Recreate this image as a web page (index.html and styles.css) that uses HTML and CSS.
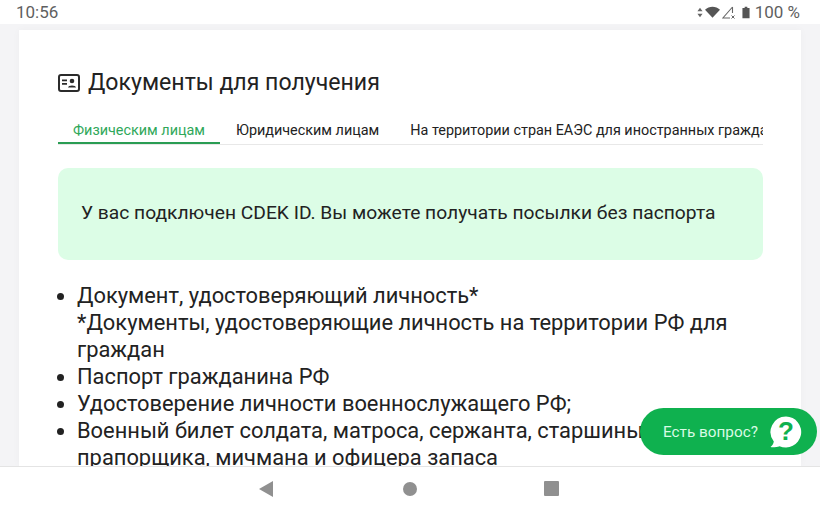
FILE: index.html
```html
<!DOCTYPE html>
<html lang="ru">
<head>
    <meta charset="UTF-8">
    <meta name="viewport" content="width=device-width, initial-scale=1.0">
    <title>Документы для получения</title>
    <link rel="stylesheet" href="styles.css">
</head>
<body>
    <div class="status-bar">
        <span class="status-time">10:56</span>
        <div class="status-icons">
            <svg width="6" height="11" viewBox="0 0 7 12"><path d="M3.5 0.5 6.5 4.600H0.500ZM3.500 11.500 0.500 7.400H6.500Z" fill="#666"/></svg>
            <svg class="status-wifi" width="15" height="12" viewBox="0 0 16 12"><path d="M0 3.600C4.400-.6 11.600-.6 16 3.600L8 12Z" fill="#555"/></svg>
            <svg class="status-signal" width="13" height="13" viewBox="0 0 13 13"><path d="M10.500 1 .9 12H8M10.500 1V7" fill="none" stroke="#666" stroke-width="1.100"/><path d="M9.500 9.500 12.500 12.500M12.500 9.500 9.500 12.500" stroke="#666" stroke-width="1"/></svg>
            <svg class="status-battery" width="8" height="13" viewBox="0 0 9 13"><path d="M3 0H6V1.300H8.500V13H.5V1.300H3Z" fill="#555"/></svg>
            <span class="status-level">100 %</span>
        </div>
    </div>

    <main class="page">
        <div class="card">
            <h1 class="title">
                <svg width="22" height="18" viewBox="0 0 22 18"><rect x="1" y="1" width="20" height="16" rx="2" fill="none" stroke="#2b2b2b" stroke-width="2"/><path d="M4 5.500H9V7.200H4ZM4 9H9V10.700H4Z" fill="#2b2b2b"/><circle cx="14" cy="7" r="2.300" fill="#2b2b2b"/><path d="M10 13.500C10 10.800 18 10.800 18 13.500Z" fill="#2b2b2b"/></svg>
                Документы для получения
            </h1>

            <div class="tabs">
                <a class="tab tab-active">Физическим лицам</a>
                <a class="tab">Юридическим лицам</a>
                <a class="tab">На территории стран ЕАЭС для иностранных граждан</a>
            </div>

            <div class="notice">У вас подключен CDEK ID. Вы можете получать посылки без паспорта</div>

            <ul class="doc-list">
                <li>Документ, удостоверяющий личность*<br>*Документы, удостоверяющие личность на территории РФ для граждан</li>
                <li>Паспорт гражданина РФ</li>
                <li>Удостоверение личности военнослужащего РФ;</li>
                <li>Военный билет солдата, матроса, сержанта, старшины, прапорщика, мичмана и офицера запаса</li>
            </ul>
        </div>
    </main>

    <a class="help-btn">
        <span>Есть вопрос?</span>
        <svg width="32" height="32" viewBox="0 0 32 32"><path d="M16 0.500A15.500 15.500 0 1 1 9.500 30.200C7 31 3 31.500 0.500 31C2.500 29.500 3.500 27.500 3.800 25.500A15.500 15.500 0 0 1 16 0.500Z" fill="#fff"/><text x="16" y="24" text-anchor="middle" class="help-mark">?</text></svg>
    </a>

    <div class="nav-bar">
        <svg class="nav-back" width="14" height="16" viewBox="0 0 14 16"><path d="M14 0V16L0 8Z" fill="#909090"/></svg>
        <svg width="14" height="14" viewBox="0 0 14 14"><circle cx="7" cy="7" r="7" fill="#909090"/></svg>
        <svg width="15" height="15" viewBox="0 0 15 15"><rect width="15" height="15" rx="1" fill="#909090"/></svg>
    </div>
</body>
</html>
```

FILE: styles.css
```css
* {
    box-sizing: border-box;
}
body {
    margin: 0;
    width: 820px;
    height: 512px;
    overflow: hidden;
    position: relative;
    display: flex;
    flex-direction: column;
    font-family: Roboto, "Noto Sans", sans-serif;
    background: #fff;
    color: #222;
}
.status-bar {
    height: 24px;
    flex: none;
    display: flex;
    justify-content: space-between;
    align-items: center;
    padding: 0 20px 0 16px;
    color: #5f5f5f;
    font-size: 17px;
}
.status-icons {
    display: flex;
    align-items: center;
    gap: 2px;
}
.status-battery {
    margin: 0 3px 0 5px;
}
.page {
    flex: 1;
    min-height: 0;
    overflow: hidden;
    background: #f4f4f6;
    padding: 6px 19px 0;
}
.card {
    background: #fff;
    height: 100%;
    padding: 39px 38px 0 39px;
    overflow: hidden;
    box-shadow: 0 0 8px rgba(0,0,0,0.03);
}
.title {
    display: flex;
    align-items: center;
    gap: 8px;
    margin: 0 0 12px;
    font-size: 23.1px;
    line-height: 28px;
    font-weight: 400;
}
.tabs {
    display: flex;
    gap: 1px;
    height: 36px;
    white-space: nowrap;
    overflow: hidden;
    border-bottom: 1px solid #e8e8e8;
}
.tab {
    padding: 10px 15px 0;
    font-size: 14.4px;
    line-height: 24px;
    flex: none;
}
.tab-active {
    color: #2fa85a;
    box-shadow: inset 0 -2px 0 #2a9d54;
}
.notice {
    margin-top: 23px;
    height: 92px;
    padding: 0 23px 3px;
    display: flex;
    align-items: center;
    background: #dcfde6;
    border-radius: 10px;
    font-size: 19.23px;
}
.doc-list {
    margin: 22px 0 0;
    padding: 0 0 0 19px;
    font-size: 21.87px;
    line-height: 27px;
}
.help-btn {
    position: absolute;
    left: 640px;
    top: 408px;
    width: 177px;
    height: 47px;
    border-radius: 24px;
    background: #0fb14f;
    color: #d9fbe5;
    font-size: 15.3px;
    display: flex;
    align-items: center;
    justify-content: space-between;
    padding: 0 15px 0 23px;
}
.help-mark {
    font-family: "Liberation Sans", sans-serif;
    font-size: 26px;
    font-weight: 700;
    fill: #0fb14f;
}
.nav-bar {
    height: 46px;
    flex: none;
    background: #fff;
    border-top: 1px solid #e4e4e4;
    display: flex;
    justify-content: center;
    align-items: center;
    gap: 127px;
    padding: 0 2px 2px 0;
}
.nav-back {
    margin-right: 3px;
}
```
